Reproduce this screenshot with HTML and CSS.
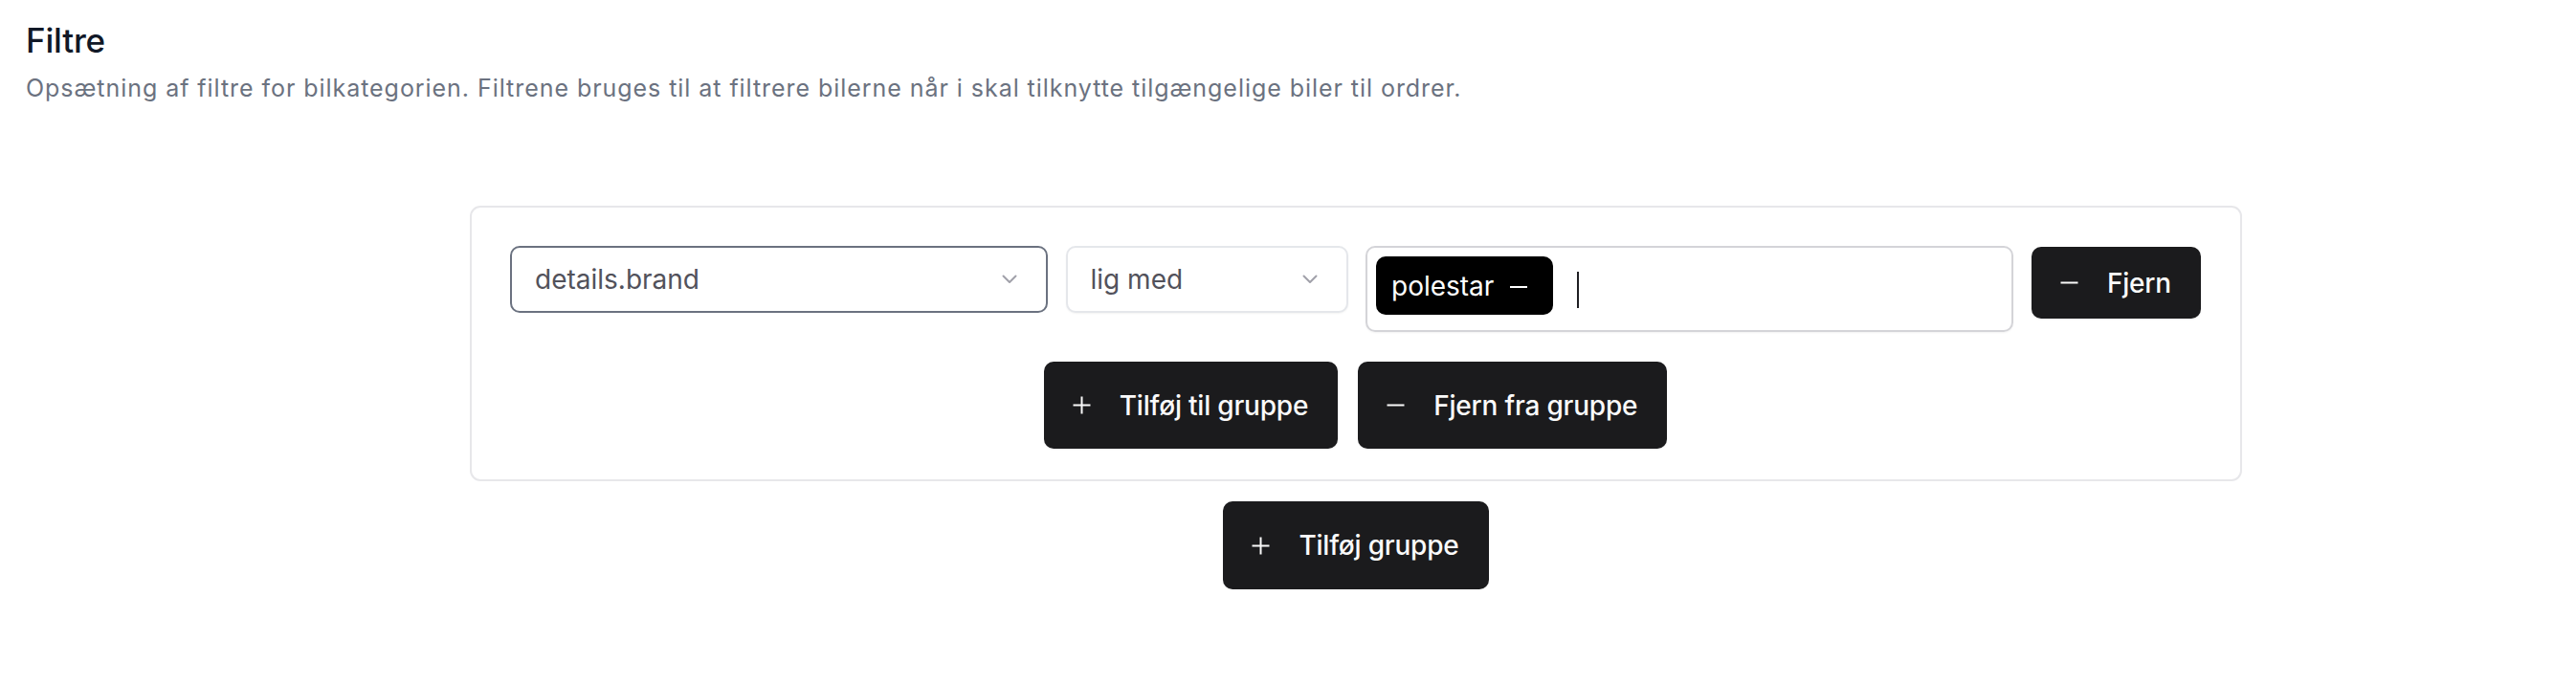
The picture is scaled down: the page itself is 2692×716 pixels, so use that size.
FILE: index.html
```html
<!DOCTYPE html>
<html lang="da">
<head>
<meta charset="utf-8">
<title>Filtre</title>
<link rel="stylesheet" href="styles.css">
</head>
<body>
<header class="page-head">
  <h1 class="title">Filtre</h1>
  <p class="subtitle">Opsætning af filtre for bilkategorien. Filtrene bruges til at filtrere bilerne når i skal tilknytte tilgængelige biler til ordrer.</p>
</header>

<section class="builder">
  <div class="group-card">
    <div class="rule-row">
      <div class="select select-field">
        <span class="select-value">details.brand</span>
        <svg class="chevron" width="16" height="10" viewBox="0 0 16 10"><polyline points="1.5,1.5 8,8 14.5,1.5" fill="none" stroke="currentColor" stroke-width="2" stroke-linecap="round" stroke-linejoin="round"/></svg>
      </div>
      <div class="select select-op">
        <span class="select-value">lig med</span>
        <svg class="chevron" width="16" height="10" viewBox="0 0 16 10"><polyline points="1.5,1.5 8,8 14.5,1.5" fill="none" stroke="currentColor" stroke-width="2" stroke-linecap="round" stroke-linejoin="round"/></svg>
      </div>
      <div class="tag-input">
        <span class="chip">polestar
          <svg class="chip-x" width="20" height="4" viewBox="0 0 20 4"><line x1="1" y1="2" x2="19" y2="2" stroke="currentColor" stroke-width="2"/></svg>
        </span>
        <span class="caret"></span>
      </div>
      <button class="btn btn-remove">
        <svg class="icon" width="19" height="19" viewBox="0 0 19 19"><line x1="0.5" y1="9.5" x2="18.5" y2="9.5" stroke="currentColor" stroke-width="2"/></svg>
        <span>Fjern</span>
      </button>
    </div>
    <div class="group-actions">
      <button class="btn btn-lg">
        <svg class="icon" width="19" height="19" viewBox="0 0 19 19"><line x1="0.5" y1="9.5" x2="18.5" y2="9.5" stroke="currentColor" stroke-width="2"/><line x1="9.5" y1="0.5" x2="9.5" y2="18.5" stroke="currentColor" stroke-width="2"/></svg>
        <span>Tilføj til gruppe</span>
      </button>
      <button class="btn btn-lg">
        <svg class="icon" width="19" height="19" viewBox="0 0 19 19"><line x1="0.5" y1="9.5" x2="18.5" y2="9.5" stroke="currentColor" stroke-width="2"/></svg>
        <span>Fjern fra gruppe</span>
      </button>
    </div>
  </div>
  <div class="builder-actions">
    <button class="btn btn-lg btn-add-group">
      <svg class="icon" width="19" height="19" viewBox="0 0 19 19"><line x1="0.5" y1="9.5" x2="18.5" y2="9.5" stroke="currentColor" stroke-width="2"/><line x1="9.5" y1="0.5" x2="9.5" y2="18.5" stroke="currentColor" stroke-width="2"/></svg>
      <span>Tilføj gruppe</span>
    </button>
  </div>
</section>
</body>
</html>
```
FILE: styles.css
```css
* { box-sizing: border-box; }

html, body {
  margin: 0;
  background: #ffffff;
}

body {
  font-family: Inter, "Noto Sans", "Liberation Sans", sans-serif;
  padding: 18px 28px 0 27px;
  color: #111827;
}

.page-head {
  display: flex;
  flex-direction: column;
  gap: 8px;
}

.title {
  margin: 0;
  font-size: 35px;
  line-height: 49px;
  font-weight: 500;
  color: #111827;
  letter-spacing: -0.2px;
}

.subtitle {
  margin: 0;
  font-size: 25px;
  line-height: 35px;
  letter-spacing: 0.95px;
  color: #6b7280;
}

.builder {
  margin: 105px 0 0 464px;
  width: 1852px;
  display: flex;
  flex-direction: column;
  align-items: stretch;
  gap: 21px;
}

.group-card {
  border: 2px solid #e7e7ea;
  border-radius: 11px;
  padding: 40px 41px 32px 40px;
  display: flex;
  flex-direction: column;
  gap: 31px;
}

.rule-row {
  display: flex;
  align-items: flex-start;
  gap: 18.5px;
}

.select {
  height: 70px;
  border-radius: 10px;
  display: flex;
  align-items: center;
  justify-content: space-between;
  padding: 0 30px 0 24px;
  font-size: 28px;
  color: #52525b;
  background: #fff;
}

.select-field {
  width: 562px;
  border: 2px solid #6b7280;
}

.select-op {
  width: 295px;
  border: 2px solid #e5e7eb;
  box-shadow: 0 1px 2px rgba(0, 0, 0, 0.05);
}

.select-value {
  line-height: 40px;
}

.chevron {
  color: #a1a1aa;
  flex: none;
}

.tag-input {
  flex: 1;
  height: 90px;
  border: 2px solid #d4d4d8;
  border-radius: 10px;
  box-shadow: 0 1px 2px rgba(0, 0, 0, 0.05);
  padding: 9px 9px;
  display: flex;
  align-items: flex-start;
  gap: 25px;
}

.chip {
  height: 61px;
  background: #000;
  color: #fff;
  border-radius: 10px;
  padding: 0 26px 0 16px;
  display: inline-flex;
  align-items: center;
  gap: 16px;
  font-size: 28px;
  line-height: 1;
}

.chip-x {
  margin-top: 3px;
}

.caret {
  width: 2px;
  height: 38px;
  background: #1f1f23;
  margin-top: 16px;
}

.btn {
  border: 0;
  background: #1b1b1d;
  color: #fafafa;
  font-family: inherit;
  font-size: 28px;
  font-weight: 500;
  letter-spacing: -0.2px;
  border-radius: 10px;
  display: inline-flex;
  align-items: center;
  gap: 30px;
  padding: 0 31px 0 30px;
  box-shadow: 0 1px 2px rgba(0, 0, 0, 0.06);
  cursor: pointer;
}

.btn .icon {
  flex: none;
}

.btn-remove {
  height: 75px;
  margin-top: 1px;
  flex: none;
}

.btn-lg {
  height: 91px;
}

.group-actions {
  display: flex;
  justify-content: center;
  gap: 21px;
}

.builder-actions {
  display: flex;
  justify-content: center;
}

.btn-add-group {
  height: 92px;
}
```
